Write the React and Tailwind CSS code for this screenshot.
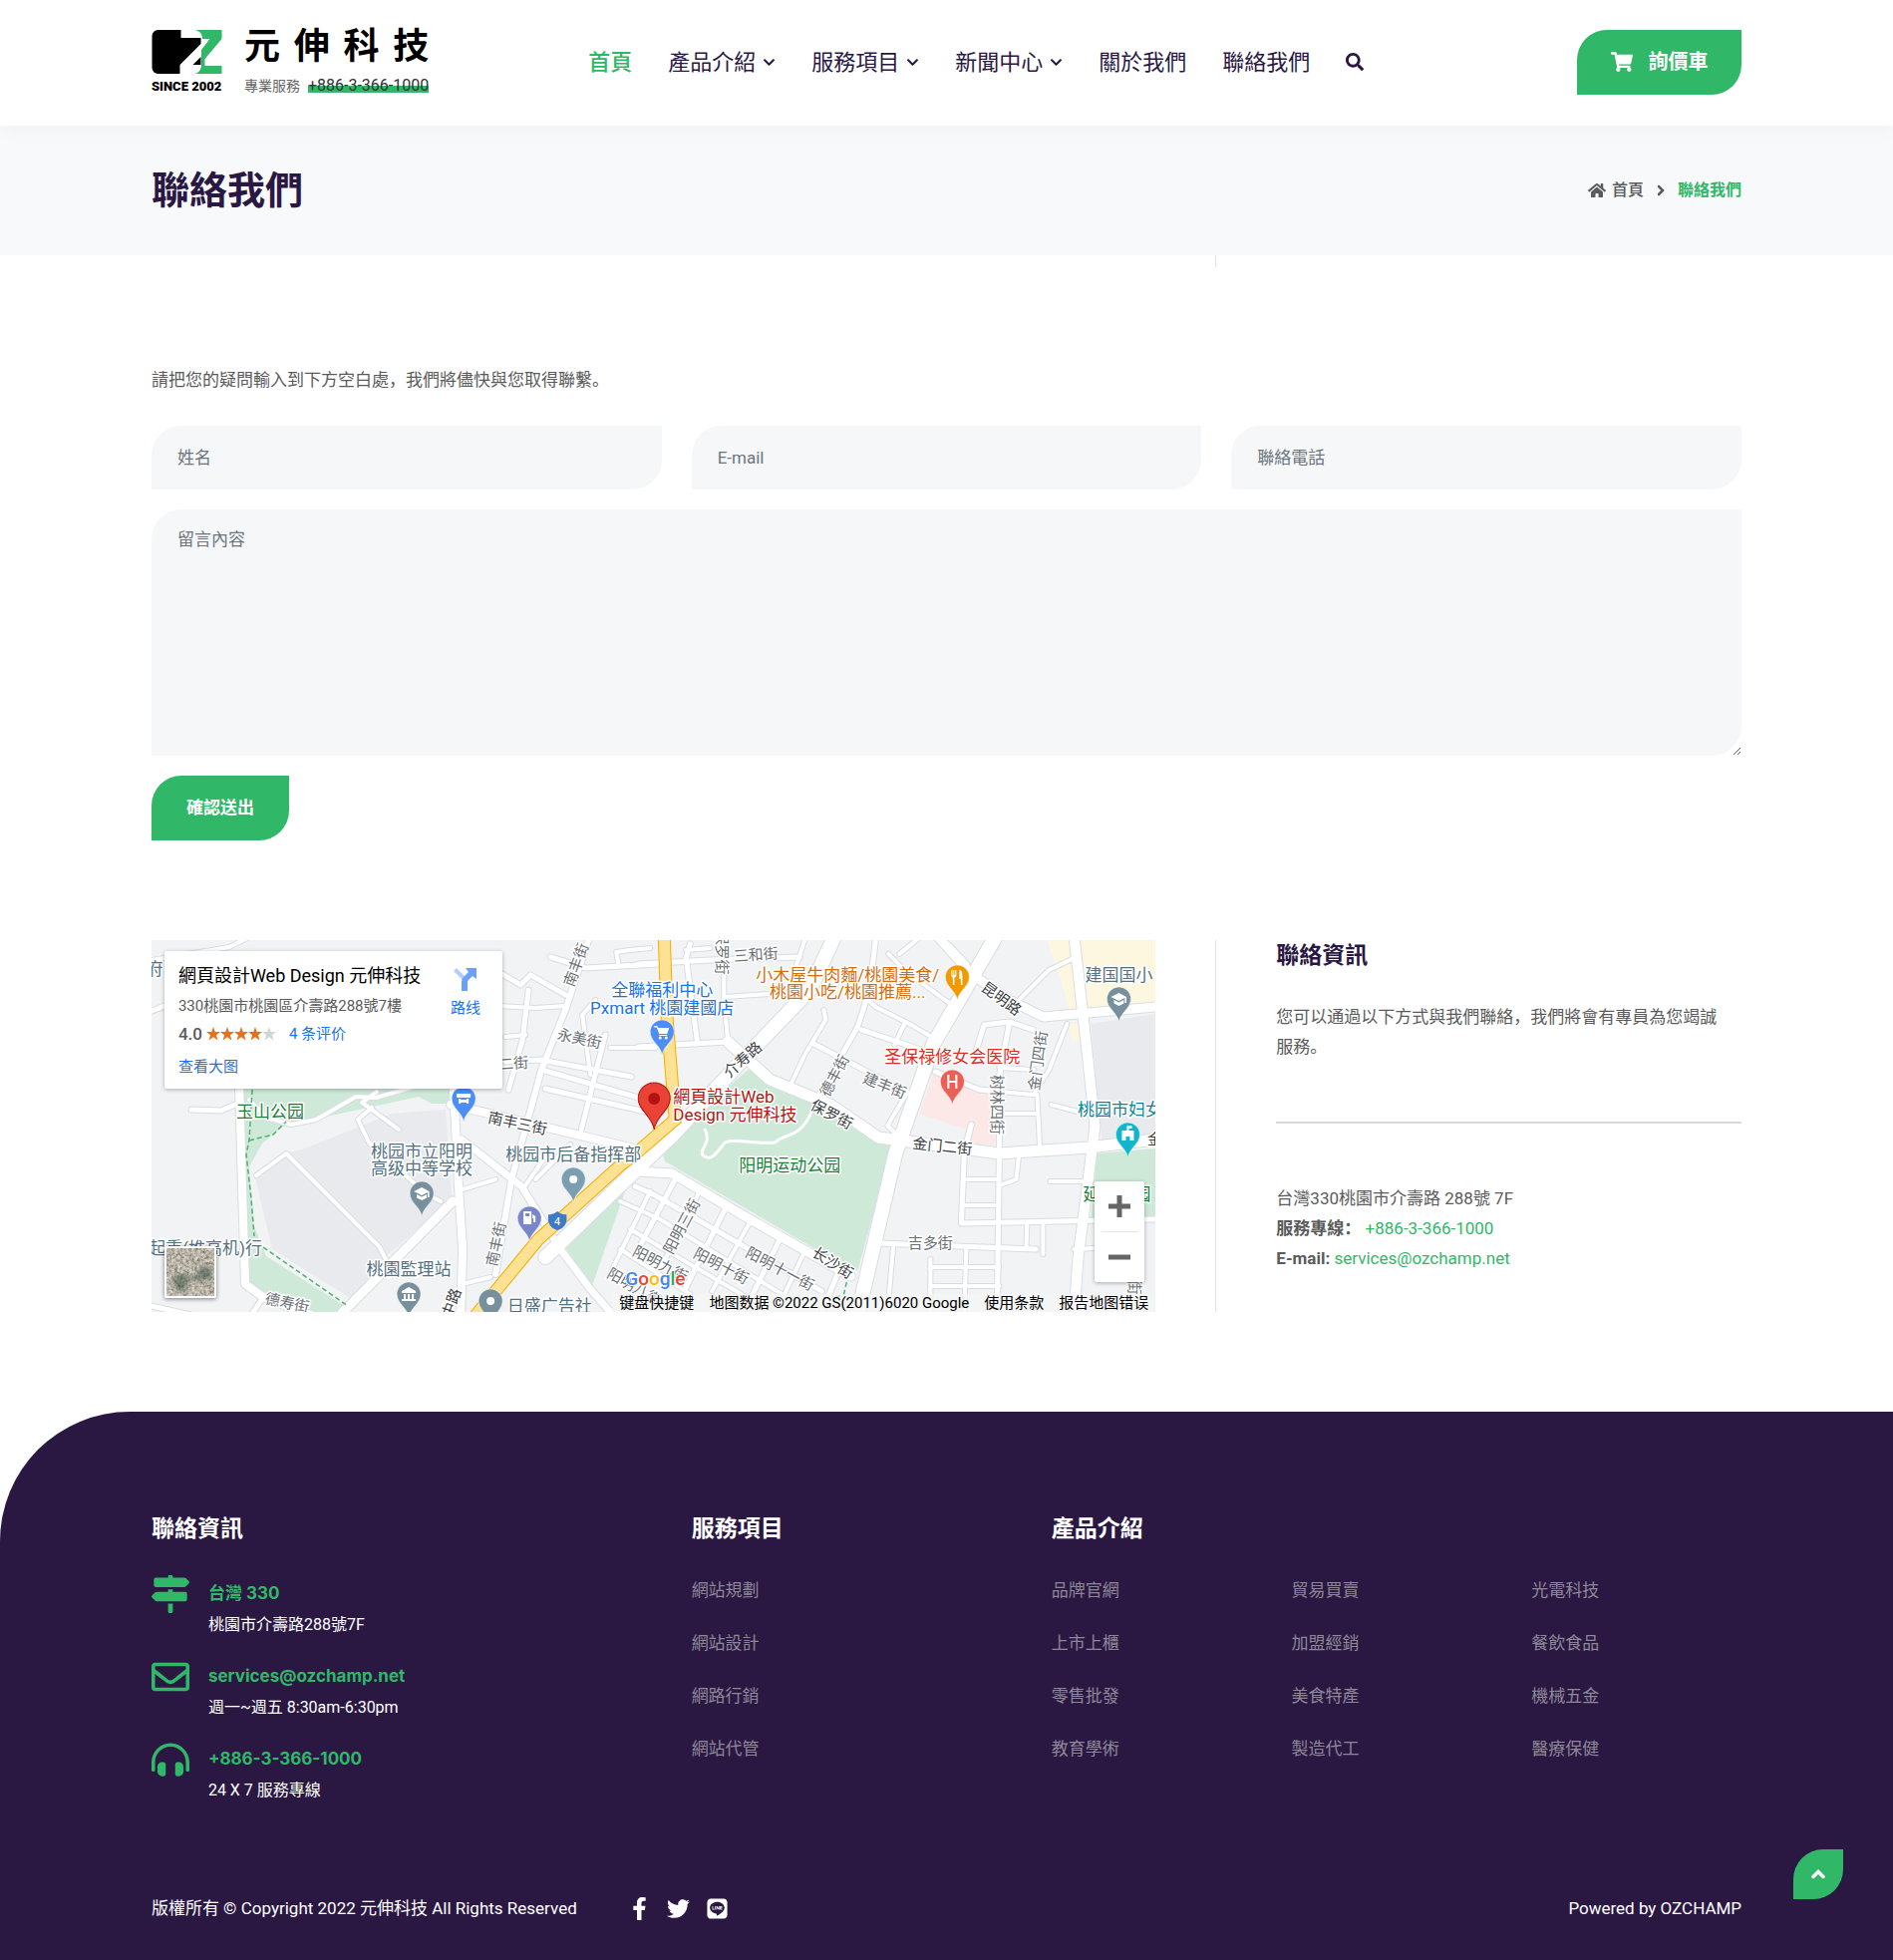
import React from "react";
import {
  FaSearch, FaShoppingCart, FaHome, FaChevronDown,
  FaMapSigns, FaRegEnvelope, FaHeadphonesAlt, FaFacebookF, FaTwitter, FaLine,
} from "react-icons/fa";

const NAV = [
  { label: "首頁", active: true },
  { label: "產品介紹", menu: true },
  { label: "服務項目", menu: true },
  { label: "新聞中心", menu: true },
  { label: "關於我們" },
  { label: "聯絡我們" },
];

function Logo() {
  return (
    <a href="#" className="flex shrink-0 items-start gap-[22px] text-black">
      <span className="flex w-[71px] flex-col pt-[2px]">
        <svg viewBox="0 0 70 44" className="h-11 w-[71px]" aria-hidden="true">
          <path d="M6 0H29V8H49V14L28 35V44H6a6 6 0 0 1-6-6V6a6 6 0 0 1 6-6z" />
          <path d="M49 27V35H41z" />
          <path fill="#31b768" d="M43 0H70V9L53 29V36H70V44H43C47 43 49 40 49.500 36V20L58 9H50.500C50.500 4 48 1 43 0z" />
        </svg>
        <span className="mt-[3px] text-[13px] leading-[20px] font-black whitespace-nowrap">SINCE 2002</span>
      </span>
      <span className="flex flex-col">
        <span className="flex justify-between text-[36px] leading-[38px] font-bold">
          <span>元</span><span>伸</span><span>科</span><span>技</span>
        </span>
        <span className="mt-[11px] flex items-center gap-2 text-[14px] leading-[18px] text-[#666]">
          專業服務
          <span className="bg-[linear-gradient(transparent_9px,#31b768_9px,#31b768_16px,transparent_16px)] text-[16px] leading-[18px] text-[#333]">+886-3-366-1000</span>
        </span>
      </span>
    </a>
  );
}

function Header() {
  return (
    <header className="relative bg-white px-[8%] shadow-[0_5px_20px_rgba(0,0,0,0.03)]">
      <div className="flex h-[126px] items-center pb-[2px]">
        <Logo />
        <nav className="ml-[160px] flex items-center gap-9 text-[22px] text-[#2a1843]">
          {NAV.map((n) => (
            <a key={n.label} href="#" className={n.active ? "font-medium whitespace-nowrap text-[#31b768]" : "flex items-center gap-[7px] whitespace-nowrap"}>
              {n.label}
              {n.menu && <FaChevronDown className="size-[13px]" />}
            </a>
          ))}
          <button type="button" aria-label="搜尋"><FaSearch className="size-[18px]" /></button>
        </nav>
        <a href="#" className="ml-auto flex h-[65px] w-[165px] items-center justify-center gap-4 rounded-tl-[30px] rounded-br-[30px] bg-[#31b768] text-[20px] font-bold whitespace-nowrap text-white">
          <FaShoppingCart className="size-[22px]" />
          詢價車
        </a>
      </div>
    </header>
  );
}

function TitleBand() {
  return (
    <section className="flex h-[130px] items-center justify-between bg-[#f7f9fb] px-[8%]">
      <h1 className="text-[38px] font-bold text-[#2a1843]">聯絡我們</h1>
      <nav className="flex items-center text-[16px] font-medium text-[#5b5b5b]" aria-label="breadcrumb">
        <a href="#" className="flex items-center gap-[6px]"><FaHome className="size-[18px]" />首頁</a>
        <svg viewBox="0 0 8 12" className="mx-[13px] h-3 w-2" aria-hidden="true">
          <path d="M2 2L6 6 2 10" fill="none" stroke="currentColor" strokeWidth="2.500" strokeLinecap="round" />
        </svg>
        <span className="font-bold text-[#31b768]">聯絡我們</span>
      </nav>
    </section>
  );
}

const FIELD = "block w-full rounded-tl-[30px] rounded-br-[30px] bg-[#f6f7f9] px-[26px] text-[17px] placeholder:text-[#6c757d] outline-none";

function ContactForm() {
  return (
    <form className="px-[8%]" onSubmit={(e) => e.preventDefault()}>
      <p className="leading-[30px]">請把您的疑問輸入到下方空白處，我們將儘快與您取得聯繫。</p>
      <div className="mt-[31px] grid grid-cols-3 gap-[30px]">
        <input type="text" aria-label="姓名" placeholder="姓名" className={FIELD + " h-16"} />
        <input type="email" aria-label="E-mail" placeholder="E-mail" className={FIELD + " h-16"} />
        <input type="tel" aria-label="聯絡電話" placeholder="聯絡電話" className={FIELD + " h-16"} />
      </div>
      <textarea aria-label="留言內容" placeholder="留言內容" className={FIELD + " mt-5 h-[247px] resize py-[15px] leading-[30px]"} />
      <button type="submit" className="mt-5 h-[65px] w-[138px] rounded-tl-[30px] rounded-br-[30px] bg-[#31b768] font-bold text-white">確認送出</button>
    </form>
  );
}

const AREAS = [
  ["#cee9d8", "91,149 316,149 300,164 281,164 268,157 175,177 131,187 111,204 98,227 103,287 115,317 195,368 201,373 158,373 98,349"],
  ["#e8eaed", "103,234 131,214 151,210 241,174 295,170 301,260 235,317 201,360 121,310"],
  ["#cee9d8", "598,130 680,167 743,204 708,332 690,324 515,222 511,210 533,187"],
  ["#cee9d8", "481,234 441,349 410,300"],
  ["#fef7e0", "898,0 1007,0 1007,63 955,68 920,70 912,40"],
  ["#e8eaed", "942,84 1007,74 1007,197 953,200"],
  ["#cee9d8", "948,214 1007,209 1007,277 942,279"],
  ["#fce8e6", "784,134 843,150 846,205 822,204 815,189 770,174"],
  ["#fef7e0", "920,84 932,84 934,101 923,102"],
];

const ROADS = [
  [4, "0,20 78,7 100,-4"], [5, "-2,72 13,66 40,60"], [5, "40,170 70,171 88,163"],
  [4, "105,236 135,214 228,307 235,320"], [4, "248,190 211,163 226,152"],
  [4, "98,160 115,178 140,185 165,180 205,157 225,158 260,148"],
  [4, "221,168 207,180 218,203 276,255 290,262"],
  [5, "345,30 370,45 380,35 415,55"], [5, "400,17 435,28 508,24"], [4, "468,24 466,12 480,10 500,8"],
  [5, "378,50 372,100 358,150"], [4, "345,66 385,68 415,66"], [4, "355,97 375,95"],
  [5, "355,122 390,120 481,137"], [5, "395,149 495,172"], [5, "391,130 495,160"],
  [5, "455,95 431,190"], [4, "460,108 505,108"], [4, "440,135 432,75 445,60"],
  [6, "438,0 415,70 391,130 361,240 345,335"],
  [4, "311,345 340,338"], [4, "312,250 345,240"], [4, "400,210 372,250"], [4, "420,205 385,240"],
  [5, "488,24 560,20 650,17"], [5, "540,4 536,18 547,100"], [4, "536,10 560,8"],
  [5, "488,107 578,102"], [4, "574,17 574,60 578,102"], [4, "575,57 620,54 650,50"],
  [5, "726,0 720,50 708,87 667,160"], [4, "645,30 655,0"],
  [4, "708,50 726,67 760,84 782,97"], [5, "712,90 777,112"], [5, "664,104 760,154"],
  [4, "674,70 676,80 655,115 640,147"], [4, "739,14 757,32 801,64"], [4, "750,14 772,-4"],
  [4, "800,5 818,24"], [4, "755,84 745,105"], [4, "757,154 738,186 748,196"],
  [4, "918,84 900,130 885,154"], [5, "827,110 835,85 860,82 884,90"], [4, "850,128 885,130"], [4, "850,152 885,155"],
  [5, "860,84 850,137 850,214 848,373"], [4, "850,174 888,174"], [4, "888,155 891,214"], [5, "786,132 830,150 850,152"],
  [4, "870,60 900,30 925,18"], [4, "902,165 940,175"],
  [5, "818,200 822,185 815,214 812,284 1007,280"], [4, "870,214 867,240 850,246"], [4, "815,240 850,240"], [4, "815,266 850,266"],
  [5, "729,304 887,310"], [4, "894,284 894,315"], [4, "878,284 877,310"], [4, "901,242 940,242"],
  [4, "781,320 781,373"], [4, "817,310 815,373"], [4, "781,328 850,328"], [4, "781,347 850,347"], [4, "744,304 738,373"],
  [4, "925,310 945,309"],
  [5, "485,247 505,256 672,352"], [4, "470,262 510,280 640,360"], [4, "480,290 600,360"], [4, "470,310 540,355"],
  [5, "525,240 488,310"], [4, "548,255 510,330"], [5, "575,270 535,350"], [4, "600,283 562,352"],
  [5, "630,300 598,365"], [4, "655,312 630,365"], [5, "690,330 672,373"], [4, "500,252 462,330"],
  [7, "311,200 371,247 410,310 440,350 460,373"],
  [8, "300,165 330,172 480,208"],
  [8, "88,145 91,250 94,345 112,358 160,376"], [5, "112,358 100,376"], [5, "-4,366 40,376"],
  [8, "303,150 308,250 312,310 310,376"], [9, "302,262 200,365 185,380"],
  [9, "487,232 522,234 600,280 701,337"],
  [11, "578,102 620,140 681,165 729,198 790,206 850,214 940,208 1007,200"],
  [9, "788,-4 822,34 860,60 894,77 1007,67"],
  [10, "925,-4 939,120 946,187 929,320 925,376"],
  [14, "848,-6 784,104 746,214 708,376"],
  [14, "686,-6 660,50 591,122 522,196 480,236 395,318"],
];

const TRUNK = "514,-4 517,80 525,180 488,212 470,226 388,300 322,380";

const LABELS = [
  // text, x, y (centre), colour, rotation, size
  ["玉山公园", 119, 172, "#188038"], ["桃园市立阳明", 271, 212, "#54717f"], ["高级中等学校", 271, 229, "#54717f"],
  ["桃园市后备指挥部", 423, 215, "#54717f"], ["桃園監理站", 258, 330, "#54717f"], ["日盛广告社", 399, 367, "#54717f"],
  ["起重(堆高机)行", 54, 309, "#54717f"], ["府", 3, 29, "#54717f"],
  ["全聯福利中心", 512, 50, "#1a73e8"], ["Pxmart 桃園建國店", 512, 68, "#1a73e8"],
  ["小木屋牛肉麵/桃園美食/", 698, 35, "#d56e0c"], ["桃園小吃/桃園推薦...", 698, 52, "#d56e0c"],
  ["建国国小", 970, 35, "#54717f"], ["圣保禄修女会医院", 803, 117, "#d93025"], ["桃园市妇女", 971, 170, "#0c8394"],
  ["阳明运动公园", 640, 226, "#188038"], ["延平公园", 968, 255, "#188038"],
  ["德寿街", 136, 364, "#6b7075", 12, 15], ["永美街", 429, 99, "#6b7075", 12, 15], ["南丰三街", 367, 184, "#3c4043", 12, 15],
  ["二街", 363, 124, "#6b7075", -4, 15], ["南丰街", 426, 25, "#6b7075", -70, 15], ["南丰街", 346, 305, "#6b7075", -78, 15],
  ["中路", 301, 364, "#3c4043", -70, 15], ["三和街", 606, 15, "#6b7075", -4, 15], ["保罗街", 572, 12, "#6b7075", 90, 15],
  ["昆明路", 852, 59, "#3c4043", 36, 15], ["介寿路", 593, 120, "#3c4043", -42, 15], ["德丰街", 685, 136, "#6b7075", -62, 15],
  ["建丰街", 735, 146, "#6b7075", 22, 15], ["保罗街", 682, 175, "#3c4043", 28, 15], ["树林四街", 848, 165, "#6b7075", 90, 15],
  ["金门四街", 889, 121, "#6b7075", -82, 15], ["金门二街", 793, 207, "#3c4043", 6, 15], ["阳明三街", 532, 287, "#6b7075", -62, 15],
  ["阳明九街", 510, 325, "#6b7075", 28, 15], ["阳明十街", 571, 327, "#6b7075", 28, 15], ["阳明十一街", 630, 330, "#6b7075", 28, 15],
  ["阳明八街", 484, 348, "#6b7075", 30, 15], ["长沙街", 683, 324, "#3c4043", 32, 15], ["吉多街", 781, 304, "#6b7075", 0, 15],
  ["金", 1006, 200, "#3c4043", 0, 15], ["街", 986, 348, "#6b7075", 90, 15],
];

function Pin({ x, y, fill, children }) {
  return (
    <g transform={`translate(${x} ${y})`}>
      <path d="M0 23C-2 13-12 10-12 0a12 12 0 0 1 24 0C12 10 2 13 0 23z" fill={fill} stroke="#fff" strokeOpacity="0.5" />
      <g fill="#fff">{children}</g>
    </g>
  );
}

const CAP = <path d="M0-6L-8-2 0 2 6-1V4H7.500V-2zM-5 1V4.500L0 7 5 4.500V1L0 3.500z" />;

function MapDrawing() {
  return (
    <svg viewBox="0 0 1007 373" preserveAspectRatio="xMidYMid slice" className="block h-full w-full font-['Roboto','Noto_Sans_CJK_SC',sans-serif]" role="img" aria-label="地图">
      <rect width="1007" height="373" fill="#f1f3f4" />
      {AREAS.map(([c, p]) => <polygon key={p} points={p} fill={c} />)}
      <g fill="none" stroke="#d9dce2" strokeLinejoin="round" strokeLinecap="round">
        {ROADS.map(([w, p]) => <polyline key={p} points={p} strokeWidth={w + 2} />)}
      </g>
      <g fill="none" stroke="#fff" strokeLinejoin="round" strokeLinecap="round">
        {ROADS.map(([w, p]) => <polyline key={p} points={p} strokeWidth={w} />)}
        <path d="M662 172C650 200 635 193 625 203C600 205 585 198 575 203C565 215 562 222 553 216C548 210 562 205 555 190" strokeWidth="3" />
      </g>
      <polyline points={TRUNK} fill="none" stroke="#f9ab00" strokeWidth="13" />
      <polyline points={TRUNK} fill="none" stroke="#fde293" strokeWidth="11" />
      <path d="M101 150L98 200 95 215 100 260 103 297M98 201L122 195 135 182M112 308L197 367M697 343L694 356 683 358" fill="none" stroke="#4fb072" strokeWidth="1.500" strokeDasharray="5 3" />

      <Pin x={313} y={159} fill="#4c8df6"><path d="M-7-5H7V-1H-7zM-5 0H-3V5H-5zM3 0H5V5H3zM-3 1H3V4H-3z" /></Pin>
      <Pin x={271} y={254} fill="#78909c">{CAP}</Pin>
      <Pin x={423} y={240} fill="#7b9eb0"><circle r="4" /></Pin>
      <Pin x={379} y={279} fill="#7986cb"><path d="M-6-7H2V6H-6zM3-4L6-2V4H4V0H3z" /><path d="M-4-5H0V-2H-4z" fill="#7986cb" /></Pin>
      <Pin x={258} y={355} fill="#78909c"><path d="M0-7L-7-3V-1H7V-3zM-5 0H-3V5H-5zM-1 0H1V5H-1zM3 0H5V5H3zM-7 5H7V7H-7z" /></Pin>
      <Pin x={340} y={362} fill="#78909c"><circle r="4" /></Pin>
      <Pin x={512} y={92} fill="#4c8df6"><path d="M-8-6H-5L-4-4H7L5 2H-3L-5.500-4.500H-8zM-3 3H5V4H-3z" /><circle cx="-2" cy="6" r="1.500" /><circle cx="4" cy="6" r="1.500" /></Pin>
      <Pin x={808} y={37} fill="#f29900"><path d="M-6-7H-5V-2H-4V-7H-3V-2H-2V-7H-1V-1L-3 1V8H-4.500V1L-6-1zM2-7C5-7 5-4 5-2V8H3.500V2H2z" /></Pin>
      <Pin x={803} y={142} fill="#ea5f56"><path d="M-5-7H-3V-1H3V-7H5V7H3V1H-3V7H-5z" /></Pin>
      <Pin x={970} y={59} fill="#78909c">{CAP}</Pin>
      <Pin x={979} y={195} fill="#12b5cb"><path d="M-1-9H4V-6H1V-4H6V6H2V2H-2V6H-6V-4H-1z" /></Pin>
      <path d="M398 275Q403 276 407 272Q411 276 416 275Q418 288 407 291Q396 288 398 275z" fill="#3f7ac9" />
      <text x="407" y="286" textAnchor="middle" fontSize="11" fill="#fff">4</text>
      {LABELS.map(([t, x, y, c, r = 0, s = 17], i) => (
        <text key={i} x={x} y={y} transform={`rotate(${r} ${x} ${y})`} fontSize={s} fill={c} textAnchor="middle" dominantBaseline="central" stroke="#fff" strokeWidth="3" strokeLinejoin="round" paintOrder="stroke">{t}</text>
      ))}
      <g fontSize="17" fill="#b31412" stroke="#fff" strokeWidth="3" strokeLinejoin="round" paintOrder="stroke">
        <text x="523" y="163">網頁設計Web</text>
        <text x="523" y="181">Design 元伸科技</text>
      </g>
      <path d="M504 190C502 176 488 171 488 159a16 16 0 0 1 32 0C520 171 506 176 504 190z" fill="#ea4335" stroke="#b31412" />
      <circle cx="504" cy="159" r="6" fill="#b31412" />
      <text x="475" y="346" fontSize="19" fontWeight="500" stroke="#fff" strokeWidth="2" paintOrder="stroke">
        <tspan fill="#4285f4">G</tspan><tspan fill="#ea4335">o</tspan><tspan fill="#fbbc04">o</tspan><tspan fill="#4285f4">g</tspan><tspan fill="#34a853">l</tspan><tspan fill="#ea4335">e</tspan>
      </text>
    </svg>
  );
}

function MapPanel() {
  return (
    <div className="relative h-[373px] overflow-hidden">
      <MapDrawing />
      <div className="absolute top-[11px] left-[13px] flex h-[138px] w-[339px] justify-between rounded-[2px] bg-white px-[14px] pt-3 text-[15px] shadow-[0_1px_4px_rgba(0,0,0,0.3)]">
        <div className="flex flex-col whitespace-nowrap">
          <h3 className="text-[18px] leading-[26px] text-black">網頁設計Web Design 元伸科技</h3>
          <p className="mt-[5px] leading-[24px] text-[#5b5b5b]">330桃園市桃園區介壽路288號7樓</p>
          <p className="mt-[3px] flex items-center leading-[26px]">
            <span className="text-[17px] font-medium text-[#5b5b5b]">4.0</span>
            <span className="ml-1 flex" aria-label="4.0">
              {[0, 1, 2, 3, 4].map((i) => (
                <svg key={i} viewBox="0 0 24 24" className={i < 4 ? "size-[14px] fill-[#e7711b]" : "size-[14px] fill-[#d4d4d4]"}><path d="M12 0l3 8.500h9l-7 5.500 2.600 9L12 17.500 4.400 23 7 14 0 8.500h9z" /></svg>
              ))}
            </span>
            <a href="#" className="ml-[13px] text-[#1a73e8]">4 条评价</a>
          </p>
          <a href="#" className="mt-2 leading-[24px] text-[#1a73e8]">查看大图</a>
        </div>
        <a href="#" className="mt-[5px] mr-2 flex shrink-0 flex-col items-center text-[#1a73e8]">
          <svg viewBox="0 0 23 23" className="size-[23px]" aria-hidden="true">
            <path d="M0 3L3 0 11 8 14 12 9 12z" fill="#b3cdfd" />
            <path d="M8 23V14Q8 11 10 9L15 4 12 0H23V11L19 8 14 13V23z" fill="#6ba0fb" />
          </svg>
          <span className="mt-[5px] leading-[24px] whitespace-nowrap">路线</span>
        </a>
      </div>
      <button type="button" aria-label="卫星图" className="absolute top-[307px] left-[13px] size-[52px] overflow-hidden rounded-[2px] border-2 border-white shadow-[0_1px_4px_rgba(0,0,0,0.5)]">
        <svg viewBox="0 0 48 48" className="block size-full">
          <filter id="ground" x="0" y="0" width="100%" height="100%">
            <feTurbulence type="fractalNoise" baseFrequency="0.35" numOctaves="4" seed="4" />
            <feColorMatrix values="0.8 0.3 0 0 -0.07  0.8 0.3 0 0 -0.1  0.8 0.25 0 0 -0.14  0 0 0 0 1" />
          </filter>
          <filter id="soft"><feGaussianBlur stdDeviation="2" /></filter>
          <rect width="48" height="48" filter="url(#ground)" />
          <path d="M6 28Q14 24 22 28T34 18L46 20 45 32 34 32 22 32 18 44 10 42z" fill="#2f4a3a" opacity="0.500" filter="url(#soft)" />
        </svg>
      </button>
      <div className="absolute top-[242px] right-[11px] flex w-[50px] flex-col items-center rounded-[2px] bg-white text-[#666] shadow-[0_1px_4px_rgba(0,0,0,0.3)]">
        <button type="button" aria-label="放大" className="flex h-[50px] w-full items-center justify-center">
          <svg viewBox="0 0 22 22" className="size-[22px]"><path d="M11 0V22M0 11H22" stroke="currentColor" strokeWidth="5" /></svg>
        </button>
        <span className="h-px w-[37px] bg-[#e6e6e6]" />
        <button type="button" aria-label="缩小" className="flex h-[50px] w-full items-center justify-center">
          <svg viewBox="0 0 22 22" className="size-[22px]"><path d="M0 11H22" stroke="currentColor" strokeWidth="5" /></svg>
        </button>
      </div>
      <div className="absolute right-0 bottom-0 flex h-[18px] items-center gap-[15px] bg-[#f5f5f5]/70 px-[7px] text-[15px] leading-[18px] whitespace-nowrap text-black">
        <button type="button">键盘快捷键</button>
        <span>地图数据 ©2022 GS(2011)6020 Google</span>
        <a href="#">使用条款</a>
        <a href="#">报告地图错误</a>
      </div>
    </div>
  );
}

function ContactInfo() {
  return (
    <div className="w-1/3 pr-[15px] pl-[60px]">
      <h2 className="text-[23px] leading-[32px] font-bold text-[#2a1843]">聯絡資訊</h2>
      <p className="mt-[30px] pr-3 leading-[30px]">您可以通過以下方式與我們聯絡，我們將會有專員為您竭誠服務。</p>
      <hr className="mt-[60px] border-t-2 border-[#d8d8d8]" />
      <address className="mt-[60px] leading-[30px] not-italic">
        台灣330桃園市介壽路 288號 7F<br />
        <strong>服務專線：</strong> <a href="#" className="text-[#31b768]">+886-3-366-1000</a><br />
        <strong>E-mail:</strong> <a href="#" className="text-[#31b768]">services@ozchamp.net</a>
      </address>
    </div>
  );
}

const CONTACTS = [
  { Icon: FaMapSigns, title: "台灣 330", text: "桃園市介壽路288號7F" },
  { Icon: FaRegEnvelope, title: "services@ozchamp.net", text: "週一~週五 8:30am-6:30pm" },
  { Icon: FaHeadphonesAlt, title: "+886-3-366-1000", text: "24 X 7 服務專線" },
];
const SERVICES = ["網站規劃", "網站設計", "網路行銷", "網站代管"];
const PRODUCTS = [
  ["品牌官網", "上市上櫃", "零售批發", "教育學術"],
  ["貿易買賣", "加盟經銷", "美食特產", "製造代工"],
  ["光電科技", "餐飲食品", "機械五金", "醫療保健"],
];

function LinkList({ items }) {
  return (
    <ul className="flex flex-col gap-[23px] leading-[30px] text-[#8e8797]">
      {items.map((t) => <li key={t}><a href="#">{t}</a></li>)}
    </ul>
  );
}

function Footer() {
  const heading = "text-[23px] leading-[34px] font-bold";
  return (
    <footer className="relative mt-[100px] rounded-tl-[130px] bg-[#2a1843] px-[8%] pt-[101px] pb-[37px] text-white">
      <div className="-mx-[15px] grid grid-cols-[3fr_2fr_4fr]">
        <section className="px-[15px]">
          <h2 className={heading}>聯絡資訊</h2>
          <ul className="mt-[29px] flex flex-col gap-[18px]">
            {CONTACTS.map(({ Icon, title, text }) => (
              <li key={title} className="flex gap-[19px]">
                <Icon className="size-[38px] shrink-0 text-[#31b768]" />
                <div className="pt-[2px]">
                  <p className="font-['Inter','Noto_Sans_CJK_SC',sans-serif] text-[17px] leading-[33px] font-bold text-[#31b768]">{title}</p>
                  <p className="text-[16px] leading-[30px]">{text}</p>
                </div>
              </li>
            ))}
          </ul>
        </section>
        <section className="px-[15px]">
          <h2 className={heading + " mb-[29px]"}>服務項目</h2>
          <LinkList items={SERVICES} />
        </section>
        <section className="pl-[15px]">
          <h2 className={heading + " mb-[29px]"}>產品介紹</h2>
          <div className="-mr-[15px] grid grid-cols-3">
            {PRODUCTS.map((p) => <LinkList key={p[0]} items={p} />)}
          </div>
        </section>
      </div>
      <div className="mt-[88px] flex items-center leading-[30px]">
        <p>版權所有 © Copyright 2022 元伸科技 All Rights Reserved</p>
        <div className="ml-[51px] flex items-center gap-4">
          <a href="#" aria-label="Facebook"><FaFacebookF className="size-[23px]" /></a>
          <a href="#" aria-label="Twitter"><FaTwitter className="size-[23px]" /></a>
          <a href="#" aria-label="LINE"><FaLine className="size-[23px]" /></a>
        </div>
        <p className="ml-auto">Powered by OZCHAMP</p>
      </div>
      <button type="button" aria-label="回到頂端" className="absolute right-[50px] bottom-[61px] flex size-[50px] items-center justify-center rounded-tl-[30px] rounded-br-[30px] bg-[#31b768]">
        <svg viewBox="0 0 14 10" className="h-[10px] w-[14px]" aria-hidden="true">
          <path d="M2 7.500L7 2.500 12 7.500" fill="none" stroke="currentColor" strokeWidth="3.500" strokeLinecap="round" />
        </svg>
      </button>
    </footer>
  );
}

export default function App() {
  return (
    <div className="bg-white font-['Roboto','Noto_Sans_CJK_SC',sans-serif] text-[17px] text-[#5b5b5b]">
      <Header />
      <TitleBand />
      <div className="ml-[64%] h-3 w-[5px] border-r border-[#e1e1e1]" />
      <main className="pt-[98px]">
        <ContactForm />
        <section className="mt-[100px] px-[8%]">
          <div className="-mx-[15px] flex">
            <div className="w-2/3 border-r border-[#e1e1e1] pr-[60px] pl-[15px]"><MapPanel /></div>
            <ContactInfo />
          </div>
        </section>
      </main>
      <Footer />
    </div>
  );
}
